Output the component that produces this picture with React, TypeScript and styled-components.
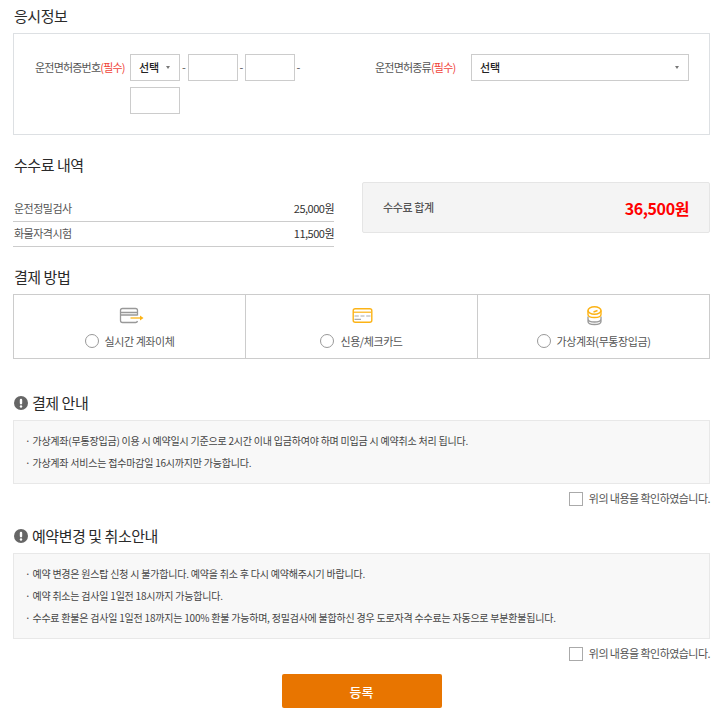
import React from "react";
import styled, { createGlobalStyle } from "styled-components";

const GlobalStyle = createGlobalStyle`
  * {
    box-sizing: border-box;
  }

  html,
  body {
    margin: 0;
    padding: 0;
    background: #fff;
  }

  body {
    font-family: "Noto Sans CJK KR", "Noto Sans", sans-serif;
    color: #333;
  }
`;

const Page = styled.div`
  width: 722px;
  height: 723px;
  padding: 6px 12px 0 13px;
  overflow: hidden;
`;

const SectionTitle = styled.h2<{ $top?: number; $bottom?: number }>`
  display: flex;
  align-items: center;
  gap: 4px;
  height: 20px;
  margin: ${(p) => p.$top ?? 0}px 0 ${(p) => p.$bottom ?? 0}px;
  padding-left: 1px;
  font-size: 15px;
  font-weight: 400;
  line-height: 20px;
  letter-spacing: -0.45px;
  color: #2a2a2a;
`;

const ExamBox = styled.div`
  display: grid;
  grid-template-columns: 340px 1fr;
  height: 102px;
  padding: 20px 20px 0 21px;
  border: 1px solid #dde0e3;
`;

const FieldGroup = styled.div`
  display: flex;
  align-items: flex-start;
`;

const FieldLabel = styled.label<{ $width: number }>`
  flex: none;
  width: ${(p) => p.$width}px;
  font-size: 11px;
  line-height: 26px;
  letter-spacing: -0.8px;
  color: #555;
  white-space: nowrap;

  em {
    font-style: normal;
    color: #f0453a;
  }
`;

const NumberFields = styled.div`
  display: flex;
  flex-wrap: wrap;
  align-items: center;
  row-gap: 6px;
  width: 190px;
`;

const Select = styled.div<{ $width: number }>`
  position: relative;
  width: ${(p) => p.$width}px;
  height: 27px;
  padding-left: 8px;
  border: 1px solid #ccc;
  font-size: 11px;
  font-weight: 500;
  line-height: 24px;
  color: #222;

  &::after {
    content: "";
    position: absolute;
    top: 11px;
    right: 9px;
    border-top: 3px solid #777;
    border-left: 2.5px solid transparent;
    border-right: 2.5px solid transparent;
  }
`;

const TextInput = styled.input`
  width: 50px;
  height: 27px;
  padding: 0;
  border: 1px solid #ccc;
  background: #fff;
  outline: none;
`;

const Dash = styled.span<{ $width: number }>`
  width: ${(p) => p.$width}px;
  font-size: 11px;
  line-height: 27px;
  text-align: center;
  color: #555;
`;

const FeeRow = styled.div`
  display: grid;
  grid-template-columns: 321px 348px;
  justify-content: space-between;
  margin-top: 7px;
`;

const FeeList = styled.div`
  padding-top: 15px;
`;

const FeeItem = styled.div`
  display: flex;
  align-items: center;
  justify-content: space-between;
  height: 25px;
  padding: 0 0 3px 1px;
  border-bottom: 1px solid #ccc;
  font-size: 11px;
  letter-spacing: -0.5px;
  color: #555;

  b {
    font-weight: 400;
    color: #333;
  }
`;

const FeeTotal = styled.div`
  display: flex;
  align-items: center;
  justify-content: space-between;
  height: 51px;
  padding: 0 20px;
  border: 1px solid #e5e5e5;
  border-radius: 2px;
  background: #f4f4f4;
  font-size: 11px;
  font-weight: 500;
  letter-spacing: -0.4px;
  color: #555;

  span {
    margin-top: -2px;
  }

  strong {
    font-size: 16px;
    font-weight: 700;
    color: #f00;
  }
`;

const PayMethods = styled.div`
  display: grid;
  grid-template-columns: 231px 232px 1fr;
  height: 65px;
  border: 1px solid #ccc;
`;

const PayMethod = styled.div`
  display: flex;
  flex-direction: column;
  align-items: center;
  padding-top: 9px;

  & + & {
    border-left: 1px solid #ccc;
  }
`;

const PayIcon = styled.svg`
  display: block;
  width: 28px;
  height: 22px;
`;

const RadioRow = styled.label`
  display: flex;
  align-items: center;
  gap: 6px;
  margin-top: 8px;
  font-size: 11px;
  line-height: 14px;
  letter-spacing: -0.42px;
  color: #555;
`;

const Radio = styled.span`
  width: 14px;
  height: 14px;
  border: 1px solid #999;
  border-radius: 50%;
  background: #fff;
`;

const NoticeBox = styled.div<{ $height: number }>`
  display: flex;
  flex-direction: column;
  gap: 8px;
  height: ${(p) => p.$height}px;
  padding: 13px 11px 0;
  border: 1px solid #e8e8e8;
  background: #f8f8f8;
  font-size: 10px;
  line-height: 14px;
  letter-spacing: -0.22px;
  color: #444;
`;

const ConfirmRow = styled.label`
  display: flex;
  align-items: center;
  justify-content: flex-end;
  gap: 6px;
  height: 14px;
  margin-top: 8px;
  font-size: 11px;
  line-height: 14px;
  letter-spacing: -0.55px;
  color: #555;

  span + span {
    margin-top: -2px;
  }
`;

const Check = styled.span`
  width: 14px;
  height: 14px;
  border: 1px solid #aaa;
  background: #fff;
`;

const SubmitButton = styled.button`
  display: block;
  width: 160px;
  height: 34px;
  margin: 13px auto 0;
  padding: 0;
  border: 0;
  border-radius: 2px;
  background: #e87500;
  font-family: inherit;
  font-size: 13px;
  font-weight: 500;
  color: #fff;
`;

const InfoIcon = () => (
  <svg width="14" height="14" viewBox="0 0 14 14" aria-hidden="true">
    <circle cx="7" cy="7" r="7" fill="#666" />
    <rect x="5.8" y="2.8" width="2.4" height="5.6" rx="1.1" fill="#fff" />
    <circle cx="7" cy="10.5" r="1.2" fill="#fff" />
  </svg>
);

const BankIcon = () => (
  <PayIcon viewBox="0 0 28 22" fill="none" aria-hidden="true">
    <path
      d="M21.5 11.5V6.5a2 2 0 0 0-2-2h-13a2 2 0 0 0-2 2v10a2 2 0 0 0 2 2h13a2 2 0 0 0 2-1.5M4.5 8.5h17M4.5 11h17"
      stroke="#999"
      strokeWidth="1.3"
    />
    <path d="M14.5 14H24" stroke="#fcb316" strokeWidth="1.3" />
    <path d="M24 11.5l3.5 2.5-3.5 2.5z" fill="#fcb316" />
  </PayIcon>
);

const CardIcon = () => (
  <PayIcon viewBox="0 0 28 22" fill="none" aria-hidden="true">
    <rect x="5.2" y="4.7" width="18.6" height="13.6" rx="2" stroke="#fcb316" strokeWidth="1.4" />
    <path d="M5 8.2h18" stroke="#fcb316" strokeWidth="1.2" />
    <path d="M6.5 12h4.3M12.5 12h4M18.2 12h4.3M6.5 15.3H13" stroke="#aaa" strokeWidth="1.2" />
  </PayIcon>
);

const CoinIcon = () => (
  <PayIcon viewBox="0 0 28 22" fill="none" aria-hidden="true">
    <path
      d="M8 12.5v5c0 1.8 2.9 3 6.5 3s6.5-1.2 6.5-3v-5M8 15c0 1.8 2.9 3 6.5 3s6.5-1.2 6.5-3"
      stroke="#999"
      strokeWidth="1.3"
    />
    <ellipse cx="14.5" cy="6.5" rx="6.5" ry="3.8" stroke="#fcb316" strokeWidth="1.5" />
    <path
      d="M8 6.5v4c0 1.8 2.9 3 6.5 3s6.5-1.2 6.5-3v-4M13.5 8l4-1.5"
      stroke="#fcb316"
      strokeWidth="1.4"
    />
  </PayIcon>
);

const App: React.FC = () => {
  return (
    <Page>
      <GlobalStyle />

      <SectionTitle $bottom={7}>응시정보</SectionTitle>
      <ExamBox>
        <FieldGroup>
          <FieldLabel $width={95}>
            운전면허증번호<em>(필수)</em>
          </FieldLabel>
          <NumberFields>
            <Select $width={50}>선택</Select>
            <Dash $width={8}>-</Dash>
            <TextInput />
            <Dash $width={7}>-</Dash>
            <TextInput />
            <Dash $width={7}>-</Dash>
            <TextInput />
          </NumberFields>
        </FieldGroup>
        <FieldGroup>
          <FieldLabel $width={96}>
            운전면허종류<em>(필수)</em>
          </FieldLabel>
          <Select $width={218}>선택</Select>
        </FieldGroup>
      </ExamBox>

      <SectionTitle $top={20}>수수료 내역</SectionTitle>
      <FeeRow>
        <FeeList>
          <FeeItem>
            운전정밀검사<b>25,000원</b>
          </FeeItem>
          <FeeItem>
            화물자격시험<b>11,500원</b>
          </FeeItem>
        </FeeList>
        <FeeTotal>
          <span>수수료 합계</span>
          <strong>36,500원</strong>
        </FeeTotal>
      </FeeRow>

      <SectionTitle $top={20} $bottom={7}>결제 방법</SectionTitle>
      <PayMethods>
        <PayMethod>
          <BankIcon />
          <RadioRow>
            <Radio />
            실시간 계좌이체
          </RadioRow>
        </PayMethod>
        <PayMethod>
          <CardIcon />
          <RadioRow>
            <Radio />
            신용/체크카드
          </RadioRow>
        </PayMethod>
        <PayMethod>
          <CoinIcon />
          <RadioRow>
            <Radio />
            가상계좌(무통장입금)
          </RadioRow>
        </PayMethod>
      </PayMethods>

      <SectionTitle $top={34} $bottom={7}>
        <InfoIcon />
        결제 안내
      </SectionTitle>
      <NoticeBox $height={64}>
        <div>· 가상계좌(무통장입금) 이용 시 예약일시 기준으로 2시간 이내 입금하여야 하며 미입금 시 예약취소 처리 됩니다.</div>
        <div>· 가상계좌 서비스는 접수마감일 16시까지만 가능합니다.</div>
      </NoticeBox>
      <ConfirmRow>
        <Check />
        <span>위의 내용을 확인하였습니다.</span>
      </ConfirmRow>

      <SectionTitle $top={20} $bottom={7}>
        <InfoIcon />
        예약변경 및 취소안내
      </SectionTitle>
      <NoticeBox $height={86}>
        <div>· 예약 변경은 원스탑 신청 시 불가합니다. 예약을 취소 후 다시 예약해주시기 바랍니다.</div>
        <div>· 예약 취소는 검사일 1일전 18시까지 가능합니다.</div>
        <div>· 수수료 환불은 검사일 1일전 18까지는 100% 환불 가능하며, 정밀검사에 불합하신 경우 도로자격 수수료는 자동으로 부분환불됩니다.</div>
      </NoticeBox>
      <ConfirmRow>
        <Check />
        <span>위의 내용을 확인하였습니다.</span>
      </ConfirmRow>

      <SubmitButton>등록</SubmitButton>
    </Page>
  );
};

export default App;
